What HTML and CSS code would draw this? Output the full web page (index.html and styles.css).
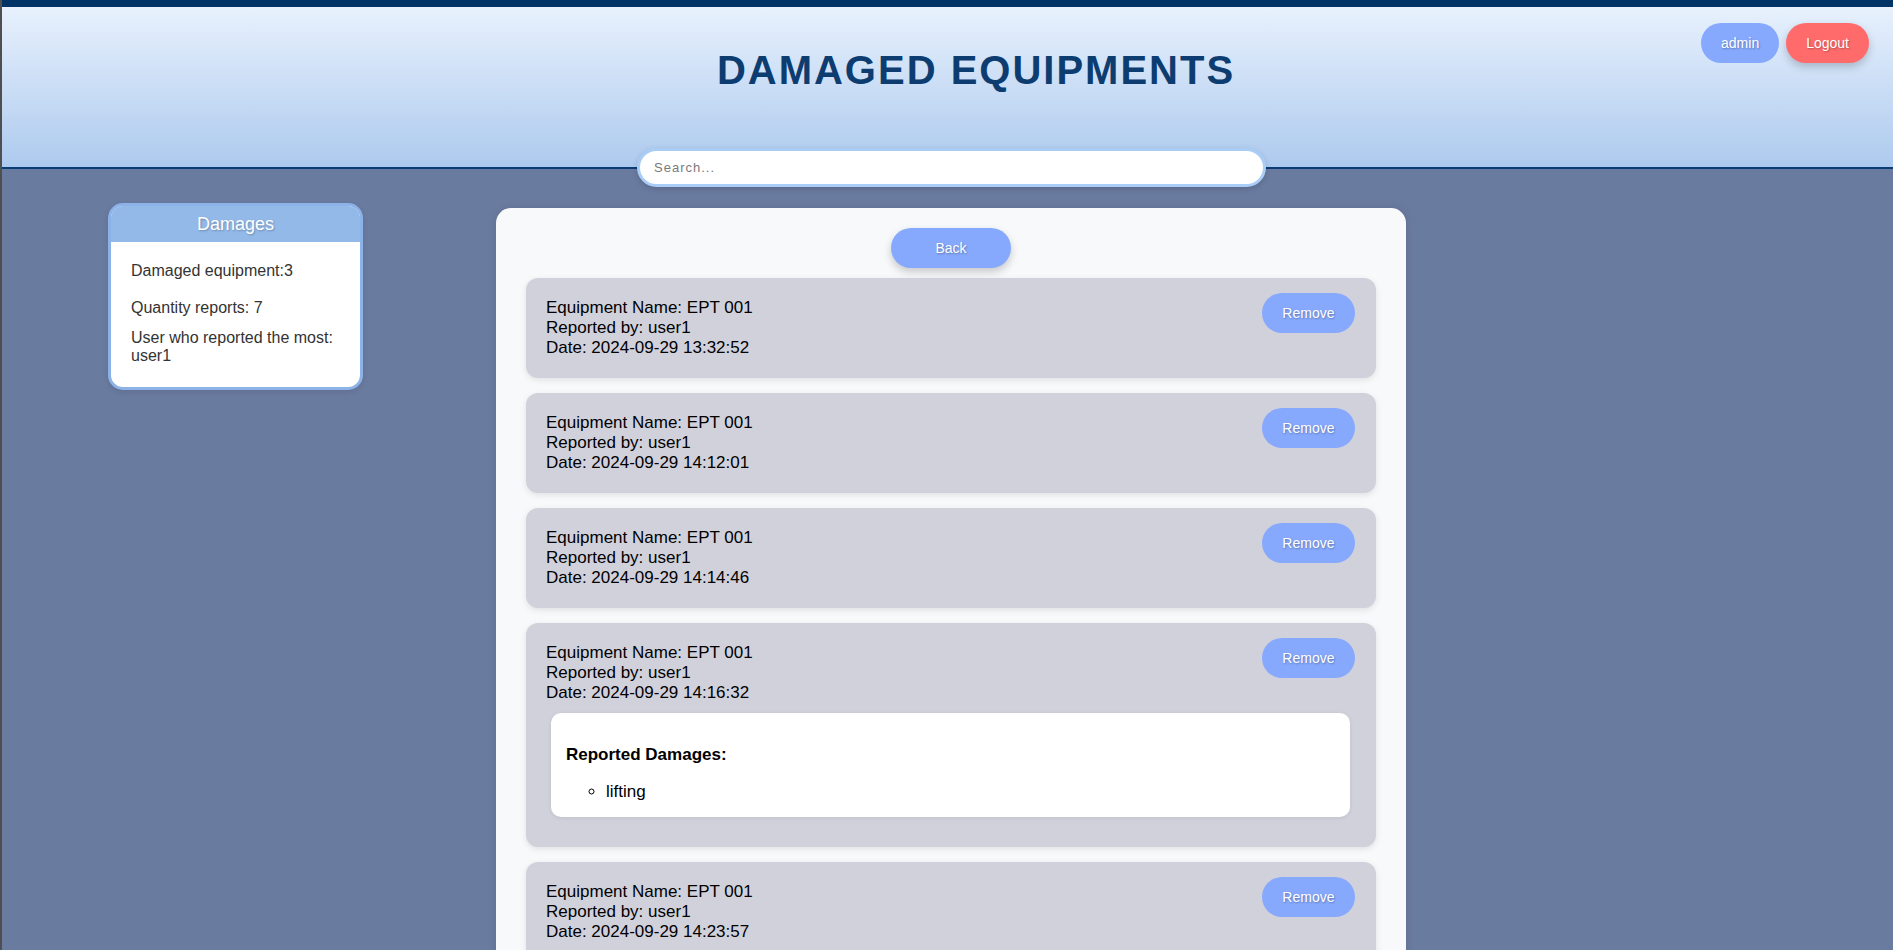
FILE: index.html
```html
<!DOCTYPE html>
<html lang="en">
<head>
<meta charset="utf-8">
<title>Damaged Equipments</title>
<link rel="stylesheet" href="styles.css">
</head>
<body>
<div class="page">
  <header class="header">
    <h1 class="title">DAMAGED EQUIPMENTS</h1>
    <div class="user-actions">
      <button class="btn btn-blue">admin</button>
      <button class="btn btn-red">Logout</button>
    </div>
  </header>
  <div class="search-row">
    <input class="search" type="text" placeholder="Search...">
  </div>
  <main class="layout">
    <aside class="stats">
      <div class="stats-head">Damages</div>
      <div class="stats-body">
        <p class="s1">Damaged equipment:3</p>
        <p class="s2">Quantity reports: 7</p>
        <p class="s3">User who reported the most: user1</p>
      </div>
    </aside>
    <section class="panel">
      <button class="btn btn-blue btn-back">Back</button>
      <div class="card">
        <div class="card-row">
          <div class="info">Equipment Name: EPT 001<br>Reported by: user1<br>Date: 2024-09-29 13:32:52</div>
          <button class="btn btn-blue btn-remove">Remove</button>
        </div>
      </div>
      <div class="card">
        <div class="card-row">
          <div class="info">Equipment Name: EPT 001<br>Reported by: user1<br>Date: 2024-09-29 14:12:01</div>
          <button class="btn btn-blue btn-remove">Remove</button>
        </div>
      </div>
      <div class="card">
        <div class="card-row">
          <div class="info">Equipment Name: EPT 001<br>Reported by: user1<br>Date: 2024-09-29 14:14:46</div>
          <button class="btn btn-blue btn-remove">Remove</button>
        </div>
      </div>
      <div class="card">
        <div class="card-row">
          <div class="info">Equipment Name: EPT 001<br>Reported by: user1<br>Date: 2024-09-29 14:16:32</div>
          <button class="btn btn-blue btn-remove">Remove</button>
        </div>
        <div class="details">
          <h4 class="details-title">Reported Damages:</h4>
          <ul class="details-list">
            <li>lifting</li>
          </ul>
        </div>
      </div>
      <div class="card">
        <div class="card-row">
          <div class="info">Equipment Name: EPT 001<br>Reported by: user1<br>Date: 2024-09-29 14:23:57</div>
          <button class="btn btn-blue btn-remove">Remove</button>
        </div>
      </div>
    </section>
  </main>
</div>
</body>
</html>
```
FILE: styles.css
```css
* { box-sizing: border-box; }
html, body { margin: 0; padding: 0; }
body {
  background: #6a7ba0;
  font-family: "Liberation Sans", Arial, sans-serif;
}
.page {
  min-height: 100vh;
  border-left: 2px solid #4f4f52;
  background: #6a7ba0;
}
.header {
  position: relative;
  border-top: 7px solid #003366;
  border-bottom: 2px solid #0a3c78;
  background: linear-gradient(to bottom, #e8f1fd, #adcaee);
  height: 169px;
  padding: 40px 0 0 57px;
}
.title {
  margin: 0;
  text-align: center;
  font-size: 40px;
  line-height: 46px;
  font-weight: bold;
  letter-spacing: 2px;
  color: #0d3d70;
}
.user-actions {
  position: absolute;
  top: 16px;
  right: 24px;
  display: flex;
  gap: 7px;
}
.btn {
  border: none;
  height: 40px;
  border-radius: 20px;
  color: #fff;
  font-family: "Liberation Sans", Arial, sans-serif;
  font-size: 14px;
  padding: 0 20px;
  text-shadow: 1px 1px 2px rgba(0,0,0,0.3);
  cursor: pointer;
}
.btn-blue { background: #86a9fe; }
.btn-red {
  background: #ff6b6b;
  box-shadow: 0 4px 8px rgba(0,0,0,0.2);
  padding: 0 20px;
}
.search-row {
  display: flex;
  justify-content: center;
  padding-left: 8px;
  margin-top: -21px;
  position: relative;
}
.search {
  width: 629px;
  height: 39px;
  border: 3px solid #a9cdf6;
  border-radius: 20px;
  background: #fff;
  padding: 0 14px;
  font-family: "Liberation Sans", Arial, sans-serif;
  font-size: 13px;
  letter-spacing: 1px;
  box-shadow: 0 2px 6px rgba(0,0,0,0.15);
  outline: none;
}
.search::placeholder { color: #7a7a7a; }
.layout {
  display: grid;
  grid-template-columns: 255px 910px;
  column-gap: 133px;
  padding-left: 106px;
  padding-top: 16px;
  align-items: start;
}
.stats {
  border: 3px solid #8cb2e7;
  border-radius: 15px;
  overflow: hidden;
  background: #fff;
  box-shadow: 0 2px 6px rgba(0,0,0,0.1);
}
.stats-head {
  background: #93b9e9;
  height: 36px;
  line-height: 36px;
  text-align: center;
  color: #fff;
  font-size: 18px;
  text-shadow: 1px 1px 2px rgba(0,0,0,0.25);
}
.stats-body {
  padding: 20px 20px 21px;
  color: #333;
  font-size: 16px;
  line-height: 18.4px;
}
.stats-body p { margin: 0; }
.stats-body .s1 { margin-bottom: 19px; }
.stats-body .s2 { margin-bottom: 11px; }
.panel {
  margin-top: 5px;
  background: #f8f9fb;
  border-radius: 15px;
  padding: 20px 30px;
  display: flex;
  flex-direction: column;
  gap: 15px;
  box-shadow: 0 0 10px rgba(0,0,0,0.1);
  min-height: 800px;
}
.btn-back {
  align-self: center;
  width: 120px;
  margin-bottom: -5px;
  box-shadow: 0 4px 8px rgba(0,0,0,0.2);
}
.card {
  background: #d1d1db;
  border-radius: 12px;
  padding: 20px 21px 20px 20px;
  box-shadow: 0 2px 6px rgba(0,0,0,0.1);
}
.card-row {
  display: flex;
  justify-content: space-between;
  align-items: flex-start;
}
.info {
  font-size: 17px;
  line-height: 20px;
  color: #000;
}
.btn-remove {
  margin-top: -5px;
  padding: 0 20.5px;
}
.details {
  display: flow-root;
  background: #fff;
  border-radius: 10px;
  margin: 10px 5px 10px;
  padding: 0 15px;
  box-shadow: 0 1px 4px rgba(0,0,0,0.08);
}
.details-title {
  margin: 32px 0 17px;
  font-size: 17px;
  line-height: 20px;
  font-weight: bold;
  color: #000;
}
.details-list {
  margin: 0 0 15px;
  padding-left: 40px;
  list-style-type: circle;
  font-size: 17px;
  line-height: 20px;
}
```
